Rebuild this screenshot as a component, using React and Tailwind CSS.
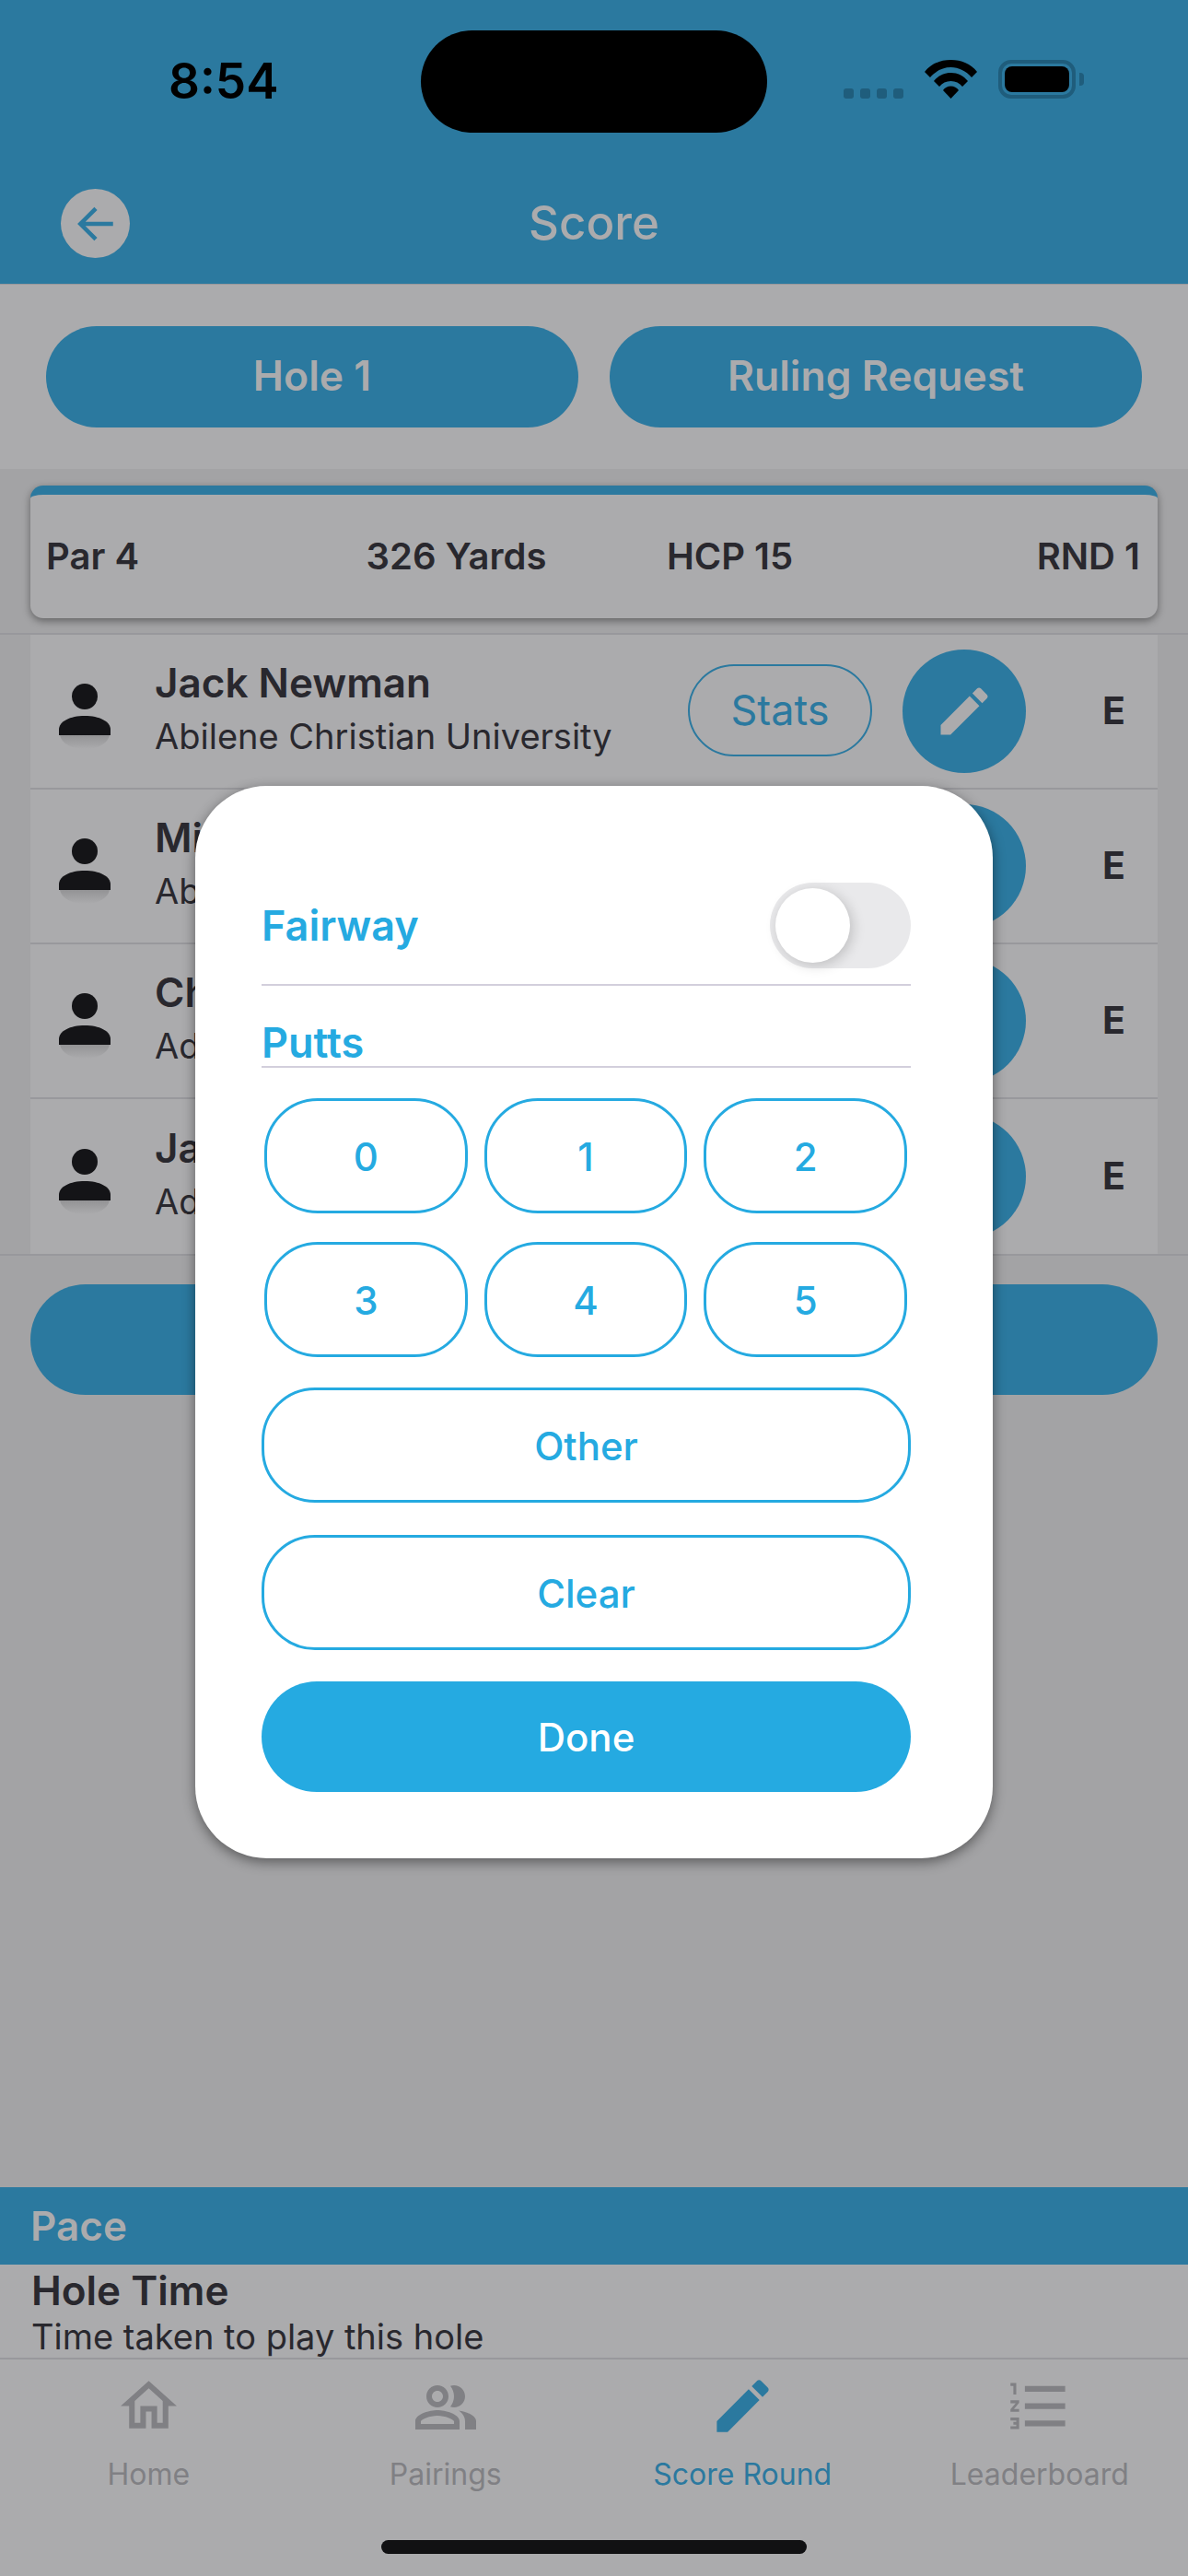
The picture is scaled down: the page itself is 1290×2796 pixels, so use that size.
import React from 'react';

const players = [
  { name: 'Jack Newman', school: 'Abilene Christian University' },
  { name: 'Mi', school: 'Ab' },
  { name: 'Ch', school: 'Ad' },
  { name: 'Ja', school: 'Ad' },
];

const PencilIcon = ({ className }) => (
  <svg viewBox="0 0 24 24" className={className} fill="currentColor">
    <path d="M3 17.25V21h3.75L17.81 9.94l-3.75-3.75L3 17.25zM20.71 7.04c.39-.39.39-1.02 0-1.41l-2.34-2.34c-.39-.39-1.02-.39-1.41 0l-1.83 1.83 3.75 3.75 1.83-1.83z" />
  </svg>
);

const Avatar = () => (
  <svg viewBox="0 0 62 90" className="w-[62px] h-[90px] shrink-0">
    <defs>
      <linearGradient id="fade" x1="0" y1="0" x2="0" y2="1">
        <stop offset="0" stopColor="#939395" />
        <stop offset="1" stopColor="#ababad" />
      </linearGradient>
    </defs>
    <path d="M4 56h54c-2 9-13 15-27 15S6 65 4 56z" fill="url(#fade)" />
    <circle cx="31" cy="14" r="14" fill="#141417" />
    <path d="M3 50c0-9 12-15 28-15s28 6 28 15v6H3z" fill="#141417" />
  </svg>
);

const StatusBar = () => (
  <div className="relative h-[172px]">
    <div className="absolute left-[183px] top-[58px] text-[53px] leading-[60px] font-semibold text-black">8:54</div>
    <div className="absolute left-[457px] top-[33px] w-[376px] h-[111px] rounded-full bg-black" />
    <div className="absolute left-[916px] top-[96px] flex gap-[7px]">
      {[0, 1, 2, 3].map((i) => (
        <div key={i} className="w-[11px] h-[11px] rounded-[3px] bg-[#1f5d7c]" />
      ))}
    </div>
    <svg viewBox="0 0 57 42" className="absolute left-[1004px] top-[65px] w-[57px] h-[42px]" fill="#000">
      <path d="M0 13C7 4 17 0 28.500 0S50 4 57 13l-6 6C45 12 37 8 28.500 8S12 12 6 19z" />
      <path d="M10 23c5-6 11-9 18.500-9S42 17 47 23l-6 6c-3-4-7.500-6-12.500-6S19 25 16 29z" />
      <path d="M20 33c2-3 5-4.500 8.500-4.500S35 30 37 33l-8.500 9z" />
    </svg>
    <div className="absolute left-[1084px] top-[65px] w-[84px] h-[42px] rounded-[14px] border-[4px] border-[#1f5d7c] p-[3px]">
      <div className="w-full h-full rounded-[8px] bg-black" />
    </div>
    <div className="absolute left-[1172px] top-[79px] w-[5px] h-[14px] rounded-r-[4px] bg-[#1f5d7c]" />
  </div>
);

const PlayerRow = ({ player, last }) => (
  <div className={`h-[168px] mx-[33px] bg-[#ababad] flex items-center ${last ? '' : 'border-b-2 border-[#98989c]'}`}>
    <div className="w-[135px] pl-[28px] mt-[30px]">
      <Avatar />
    </div>
    <div className="flex-1 min-w-0 text-[#29282e] pb-[6px]">
      <div className="text-[44px] leading-[54px] font-semibold">{player.name}</div>
      <div className="text-[38px] leading-[50px] mt-[6px]">{player.school}</div>
    </div>
    <div className="w-[200px] h-[100px] mb-[2px] rounded-[50px] border-[2px] border-[#2b799f] flex items-center justify-center text-[45px] text-[#2b799f]">
      Stats
    </div>
    <div className="ml-[33px] w-[134px] h-[134px] rounded-full bg-[#2b799f] flex items-center justify-center text-[#ababad]">
      <PencilIcon className="w-[68px] h-[68px]" />
    </div>
    <div className="w-[143px] pl-[83px] text-[41px] font-bold text-[#29282e]">E</div>
  </div>
);

const TabItem = ({ icon, label, active }) => (
  <div className={`flex flex-col items-center ${active ? 'text-[#2b799f]' : 'text-[#808084]'}`}>
    <div className="h-[84px] flex items-center justify-center">{icon}</div>
    <div className="text-[32px] leading-[40px] mt-[11px]">{label}</div>
  </div>
);

const PuttButton = ({ label, className }) => (
  <div className={`h-[125px] rounded-[58px] border-[3px] border-[#25aae1] flex items-center justify-center pt-[2px] text-[42px] font-medium text-[#25aae1] ${className || ''}`}>
    {label}
  </div>
);

const PuttsDialog = () => (
  <div className="absolute left-[212px] top-[853px] w-[866px] h-[1164px] rounded-[78px] bg-white shadow-[0_4px_14px_rgba(0,0,0,0.45)] pl-[72px] pr-[89px] pt-[105px]">
    <div className="h-[112px] border-b-2 border-[#d3cfdc] flex justify-between items-start">
      <div className="text-[45px] leading-[94px] font-semibold text-[#25aae1]">Fairway</div>
      <div className="w-[153px] h-[93px] rounded-full bg-[#e9e9eb] p-[6px]">
        <div className="w-[81px] h-[81px] rounded-full bg-white shadow-[3px_3px_14px_rgba(0,0,0,0.18)]" />
      </div>
    </div>
    <div className="h-[89px] border-b-2 border-[#d3cfdc] flex items-end">
      <div className="text-[45px] leading-[50px] font-semibold text-[#25aae1]">Putts</div>
    </div>
    <div className="grid grid-cols-3 gap-x-[18px] gap-y-[31px] mt-[33px] ml-[3px] mr-[4px]">
      {['0', '1', '2', '3', '4', '5'].map((n) => (
        <PuttButton key={n} label={n} />
      ))}
    </div>
    <PuttButton label="Other" className="mt-[33px]" />
    <PuttButton label="Clear" className="mt-[35px]" />
    <div className="mt-[34px] h-[120px] rounded-[60px] bg-[#25aae1] flex items-center justify-center text-[42px] font-medium text-white">
      Done
    </div>
  </div>
);

export default function App() {
  return (
    <div className="relative w-[1290px] h-[2796px] overflow-hidden bg-[#a3a3a5] font-['Inter',sans-serif]">
      {/* Header */}
      <div className="h-[309px] bg-[#2b799f] border-b border-[#98989c]">
        <StatusBar />
        <div className="relative h-[136px] flex items-center justify-center">
          <div className="absolute left-[66px] top-[33px] w-[75px] h-[75px] rounded-full bg-[#ababad] flex items-center justify-center text-[#2b799f]">
            <svg viewBox="0 0 24 24" className="w-[50px] h-[50px]" fill="none" stroke="currentColor" strokeWidth="2.200">
              <path d="M21 12H4.500M12 4l-8 8 8 8" />
            </svg>
          </div>
          <div className="text-[51px] font-medium text-[#ababad] mt-[5px]">Score</div>
        </div>
      </div>

      {/* Hole buttons */}
      <div className="h-[200px] bg-[#ababad] flex gap-[34px] px-[50px] pt-[45px]">
        <div className="flex-1 h-[110px] rounded-[55px] bg-[#2b799f] flex items-center justify-center pb-[2px] text-[44.5px] font-semibold text-[#ababad]">Hole 1</div>
        <div className="flex-1 h-[110px] rounded-[55px] bg-[#2b799f] flex items-center justify-center pb-[2px] text-[44.5px] font-semibold text-[#ababad]">Ruling Request</div>
      </div>

      {/* Hole info card */}
      <div className="h-[180px] pt-[18px] px-[33px] border-b-2 border-[#98989c]">
        <div className="h-[144px] rounded-[14px] bg-[#ababad] border-t-[10px] border-[#2b799f] shadow-[0_3px_8px_rgba(0,0,0,0.4)] grid grid-cols-4 items-center pl-[17px] pr-[19px] text-[40px] font-semibold text-[#29282e]">
          <div>Par 4</div>
          <div className="text-center">326 Yards</div>
          <div className="text-center">HCP 15</div>
          <div className="text-right">RND 1</div>
        </div>
      </div>

      {/* Players */}
      <div className="border-b-2 border-[#98989c]">
        {players.map((p, i) => (
          <PlayerRow key={i} player={p} last={i === players.length - 1} />
        ))}
      </div>

      <div className="mx-[33px] mt-[31px] h-[120px] rounded-[60px] bg-[#2b799f]" />

      {/* Pace */}
      <div className="mt-[860px] h-[84px] bg-[#2b799f] px-[33px] flex items-center text-[44px] font-semibold text-[#ababad]">Pace</div>
      <div className="h-[338px] bg-[#ababad]">
        <div className="h-[103px] border-b-2 border-[#98989c] px-[34px] text-[#29282e]">
          <div className="text-[44px] leading-[50px] font-semibold pt-[3px]">Hole Time</div>
          <div className="text-[38px] leading-[44px] mt-[3px]">Time taken to play this hole</div>
        </div>
        <div className="grid grid-cols-4 pt-[10px]">
          <TabItem
            label="Home"
            icon={
              <svg viewBox="0 0 24 24" className="w-[73px] h-[73px] -mt-[4px]" fill="currentColor">
                <path d="M12 5.690l5 4.500V18h-2v-6H9v6H7v-7.810l5-4.500M12 3L2 12h3v8h6v-6h2v6h6v-8h3L12 3z" />
              </svg>
            }
          />
          <TabItem
            label="Pairings"
            icon={
              <svg viewBox="0 0 24 24" className="w-[72px] h-[72px]" fill="currentColor">
                <path d="M16.670 13.130C18.040 14.060 19 15.320 19 17v3h4v-3c0-2.180-3.570-3.470-6.330-3.870zM15 12c2.210 0 4-1.790 4-4s-1.790-4-4-4c-.47 0-.91.1-1.330.24C14.500 5.270 15 6.580 15 8s-.5 2.730-1.330 3.760c.42.14.86.24 1.330.24zM9 12c2.210 0 4-1.790 4-4s-1.790-4-4-4-4 1.790-4 4 1.790 4 4 4zm0-6c1.100 0 2 .9 2 2s-.9 2-2 2-2-.9-2-2 .9-2 2-2zM9 13c-2.670 0-8 1.340-8 4v3h16v-3c0-2.660-5.330-4-8-4zm6 5H3v-.99C3.200 16.290 6.300 15 9 15s5.800 1.290 6 2v1z" />
              </svg>
            }
          />
          <TabItem active label="Score Round" icon={<PencilIcon className="w-[75px] h-[75px] -mt-[4px]" />} />
          <TabItem
            label="Leaderboard"
            icon={
              <svg viewBox="0 0 24 24" className="w-[75px] h-[75px] -mt-[4px]" fill="currentColor">
                <path d="M2 17h2v.5H3v1h1v.5H2v1h3v-4H2v1zm1-9h1V4H2v1h1v3zm-1 3h1.800L2 13.100v.9h3v-1H3.200L5 10.900V10H2v1zm5-6v2h14V5H7zm0 14h14v-2H7v2zm0-6h14v-2H7v2z" />
              </svg>
            }
          />
        </div>
      </div>

      <PuttsDialog />

      {/* Home indicator */}
      <div className="absolute left-[414px] top-[2757px] w-[462px] h-[15px] rounded-full bg-[#111113]" />
    </div>
  );
}
